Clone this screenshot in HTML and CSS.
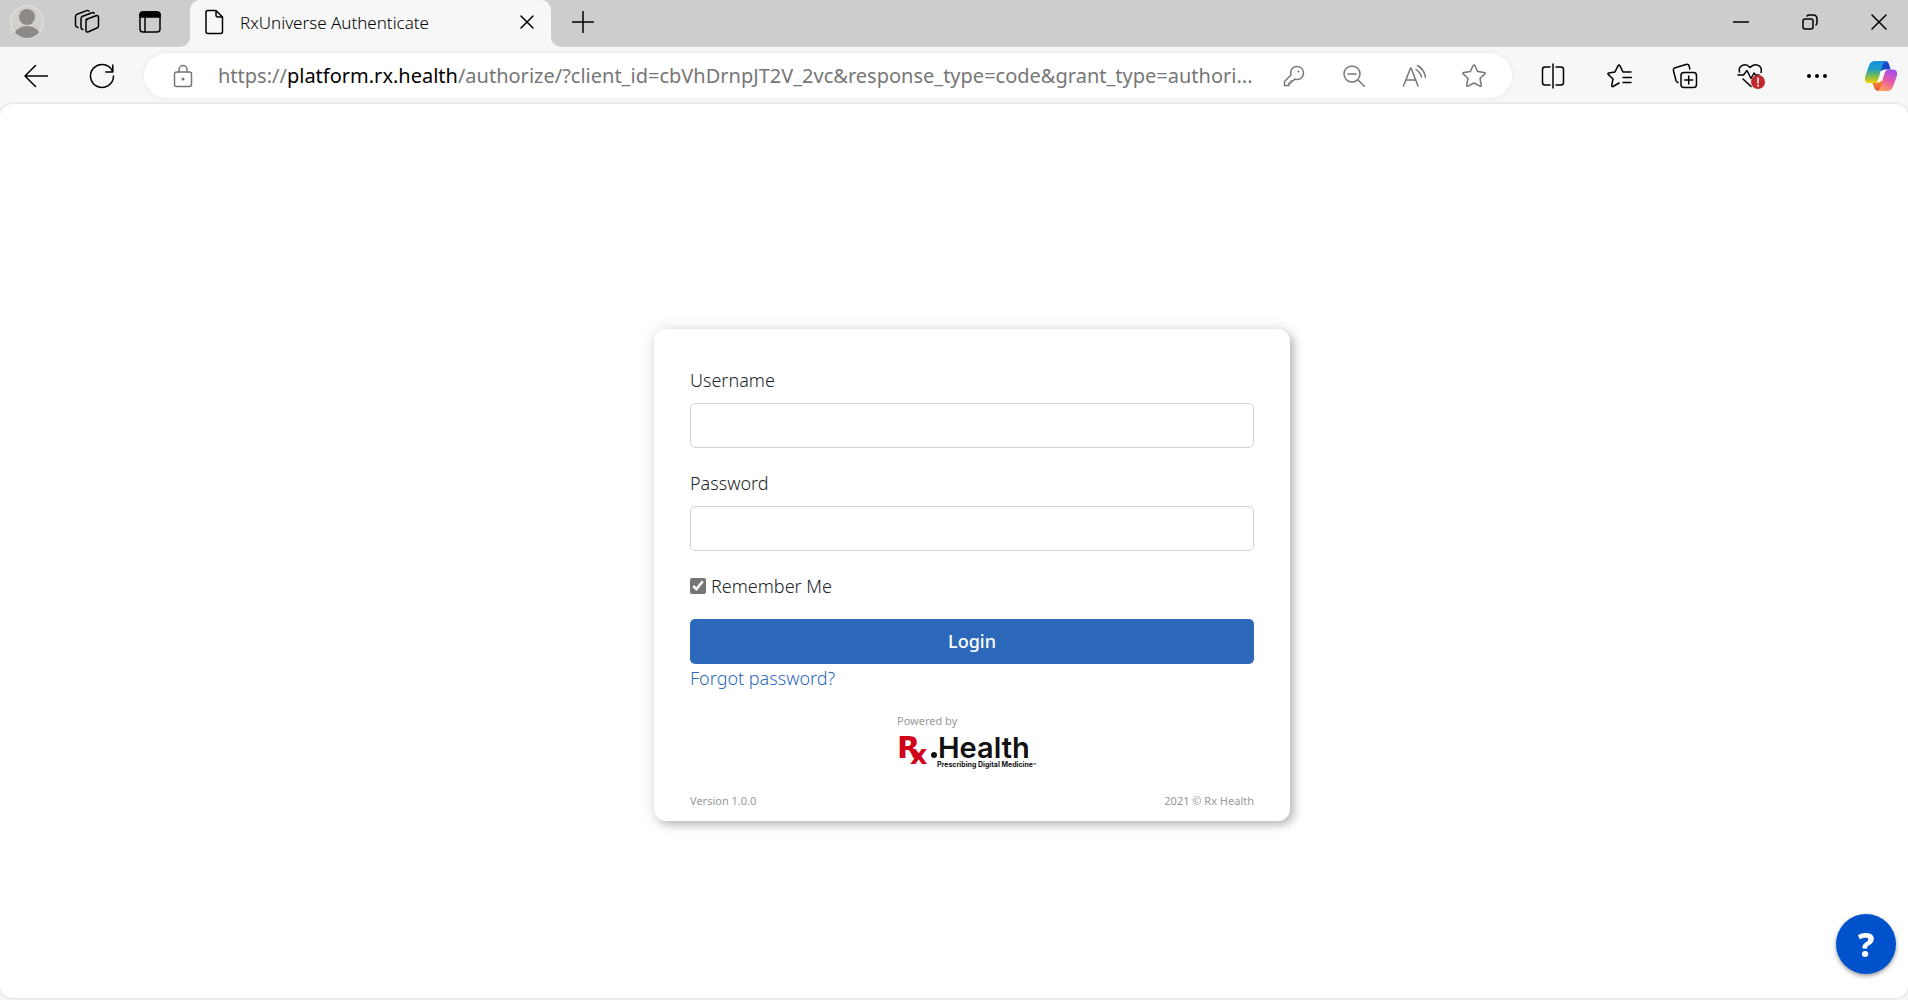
FILE: index.html
```html
<!DOCTYPE html>
<html lang="en">
<head>
    <meta charset="UTF-8">
    <meta name="viewport" content="width=device-width, initial-scale=1.0">
    <title>RxUniverse Authenticate</title>
    <link rel="stylesheet" href="styles.css">
</head>
<body>
    <header class="tab-strip">
        <div class="strip-left">
            <button class="avatar" aria-label="Profile">
                <svg width="34" height="34" viewBox="0 0 34 34">
                    <defs><clipPath id="face"><circle cx="17" cy="17" r="16"/></clipPath></defs>
                    <circle cx="17" cy="17" r="16" fill="#d2d0cc" stroke="#e0deda"/>
                    <g clip-path="url(#face)" fill="#8d8986" stroke="none">
                        <circle cx="17" cy="12" r="8"/>
                        <ellipse cx="17" cy="31" rx="13" ry="10"/>
                    </g>
                </svg>
            </button>
            <button class="workspaces" aria-label="Workspaces">
                <svg width="26" height="26" viewBox="0 0 26 26">
                    <path d="M12 10.500 22 6.700Q24.500 6 24.500 8.500V17q0 1.500-1.500 2l-8.500 3.800q-2.500 1-2.500-1.500V12.500q0-1.500 1.500-2.100"/>
                    <path d="M9 20.500q-2-.3-2-2.500V9.500q0-1.700 1.600-2.300L18 3.700q1.500-.5 2.200.6M4 18.500q-2.500-.5-2.500-2.500V7.500q0-1.700 1.600-2.300l9.400-3.600q1.800-.6 2.500.6"/>
                </svg>
            </button>
            <button class="tab-actions" aria-label="Tab actions">
                <svg width="24" height="24" viewBox="0 0 24 24">
                    <rect x="2" y="2" width="20" height="20" rx="3"/>
                    <path d="M2 7V5q0-3 3-3h14q3 0 3 3v2z" fill="#000"/>
                    <path d="M7 7v15"/>
                </svg>
            </button>
        </div>
        <div class="tab">
            <svg width="20" height="26" viewBox="0 0 20 26">
                <path d="M4 1.500h8l6.500 6.500v14.500q0 2-2 2H4q-2 0-2-2V3.500q0-2 2-2zM12 1.500V6q0 2 2 2h4.500"/>
            </svg>
            <span class="tab-title">RxUniverse Authenticate</span>
            <button class="tab-close" aria-label="Close tab">
                <svg width="14" height="14" viewBox="0 0 14 14"><path d="M1 1l12 12M13 1 1 13"/></svg>
            </button>
        </div>
        <div class="strip-right">
            <button class="new-tab" aria-label="New tab">
                <svg width="22" height="22" viewBox="0 0 22 22"><path d="M11 .5v21M.5 11h21"/></svg>
            </button>
            <div class="window-controls">
                <button aria-label="Minimize"><svg width="16" height="16" viewBox="0 0 16 16"><path d="M0 8h16"/></svg></button>
                <button aria-label="Restore">
                    <svg width="16" height="16" viewBox="0 0 16 16">
                        <rect x="1" y="5" width="10" height="10" rx="2"/>
                        <path d="M5 2q.7-1 2.500-1H11q4 0 4 4v3.500q0 1.500-1 2.300"/>
                    </svg>
                </button>
                <button aria-label="Close"><svg width="16" height="16" viewBox="0 0 16 16"><path d="M1 1l14 14M15 1 1 15"/></svg></button>
            </div>
        </div>
    </header>

    <nav class="toolbar">
        <button class="tool" aria-label="Back">
            <svg width="24" height="24" viewBox="0 0 24 24"><path d="M24 12H1M11.500 1.500 1 12l10.500 10.500"/></svg>
        </button>
        <button class="tool" aria-label="Refresh">
            <svg width="26" height="26" viewBox="0 0 26 26"><path d="M23.800 9A11.500 11.500 0 1 0 24.500 13M23.800 2v7h-7"/></svg>
        </button>
        <div class="address-bar">
            <button class="site-info" aria-label="View site information">
                <svg width="20" height="24" viewBox="0 0 20 24">
                    <rect x="1.500" y="8" width="17" height="14.500" rx="2"/>
                    <path d="M6 8V5.500a4 4 0 0 1 8 0V8"/>
                    <circle cx="10" cy="15" r="1.500" fill="#767676" stroke="none"/>
                </svg>
            </button>
            <div class="url" contenteditable="true" role="textbox" aria-label="Address" spellcheck="false">https://<span>platform.rx.health</span>/authorize/?client_id=cbVhDrnpJT2V_2vc&amp;response_type=code&amp;grant_type=authori...</div>
            <button class="page-action" aria-label="Saved passwords">
                <svg width="22" height="22" viewBox="0 0 22 22">
                    <path d="M13.500 1.500c4 0 7 2.500 7 6.500s-3 6.500-6.500 6.500c-1 0-1.500-.2-2.300-.4L10 16H8v2H6v2.500H1.500v-4L8 10C7 5 9.500 1.500 13.500 1.500z"/>
                    <circle cx="15.500" cy="6.500" r="1" fill="#767676" stroke="none"/>
                </svg>
            </button>
            <button class="page-action" aria-label="Zoom out">
                <svg width="22" height="22" viewBox="0 0 22 22"><circle cx="9" cy="9" r="8"/><path d="M5 9h8M14.800 14.800 21.500 21.500"/></svg>
            </button>
            <button class="page-action" aria-label="Read aloud">
                <svg width="24" height="24" viewBox="0 0 24 24"><path d="M1.500 22 8.500 4h.6L16 22M4 16h9.500M15.500 1.500q7 4 8 12M14 5.500q4.500 3 5.500 7.500"/></svg>
            </button>
            <button class="page-action" aria-label="Add to favorites">
                <svg width="26" height="26" viewBox="0 0 26 26">
                    <path d="M13 2q.6 0 1 .8l2.700 5.800 6.500.8q1.500.4.600 1.500L19 15.500l1.300 6.700q0 1.500-1.300 1L13 20l-6 3.200q-1.300.5-1.300-1L7 15.500 2.200 10.900q-.9-1.100.6-1.500l6.500-.8L12 2.800q.4-.8 1-.8z"/>
                </svg>
            </button>
        </div>
        <div class="tools-right">
            <button class="tool" aria-label="Split screen">
                <svg width="24" height="26" viewBox="0 0 24 26"><path d="M9 4H4Q1.500 4 1.500 6.500v13Q1.500 22 4 22h5M15 4h5q2.500 0 2.500 2.500v13q0 2.500-2.500 2.500h-5M12 1v24"/></svg>
            </button>
            <button class="tool" aria-label="Favorites">
                <svg width="26" height="26" viewBox="0 0 26 26">
                    <path d="M13 20l-6 3.500q-1.300.5-1.300-1L7 16 2.200 11.400q-.9-1.100.6-1.500l6-.8L12 2.800q1-1.600 2 0l3 6.200h8M17 14.500h8.500M17 19.500h8"/>
                </svg>
            </button>
            <button class="tool" aria-label="Collections">
                <svg width="26" height="26" viewBox="0 0 26 26">
                    <rect x="9" y="9.500" width="15.500" height="15" rx="3"/>
                    <path d="M16.700 13v8M12.700 17h8M6 19.500q-1.500-.5-2-2L1.500 8q-.6-2.500 1.700-3.200L14 1.500q2.500-.7 3.200 1.700l.6 2.800"/>
                </svg>
            </button>
            <button class="tool" aria-label="Browser essentials">
                <svg width="28" height="28" viewBox="0 0 28 28">
                    <path d="M2.500 10C1 4 8 0 13 5.500 18 0 26 3.500 24 10.500M1 13h5.500l3.500-4.500 4 8 3-5.500 1.500 2H22M6 17l8 7.500"/>
                    <circle cx="21" cy="20" r="7" fill="#c1272d" stroke="none"/>
                    <path d="M21 16v5" class="alert-mark"/>
                    <circle cx="21" cy="23.500" r="1" fill="#fff" stroke="none"/>
                </svg>
            </button>
            <button class="tool" aria-label="Settings and more">
                <svg width="22" height="6" viewBox="0 0 22 6"><g fill="#000" stroke="none"><circle cx="3" cy="3" r="2"/><circle cx="11" cy="3" r="2"/><circle cx="19" cy="3" r="2"/></g></svg>
            </button>
            <button class="copilot" aria-label="Copilot">
                <svg width="34" height="32" viewBox="0 0 34 32">
                    <defs>
                        <linearGradient id="cool" x1="0" y1="0" x2="0" y2="1"><stop offset="0" stop-color="#1490df"/><stop offset=".35" stop-color="#1b9fc9"/><stop offset=".65" stop-color="#6dba5b"/><stop offset="1" stop-color="#f5d000"/></linearGradient>
                        <linearGradient id="warm" x1=".7" y1="0" x2=".3" y2="1"><stop offset="0" stop-color="#a04ef0"/><stop offset=".5" stop-color="#e95aa6"/><stop offset="1" stop-color="#ffa257"/></linearGradient>
                        <linearGradient id="deep" x1="0" y1="0" x2="1" y2="1"><stop offset="0" stop-color="#1a58d8"/><stop offset="1" stop-color="#1736b8"/></linearGradient>
                        <linearGradient id="ember" x1="0" y1="0" x2="0" y2="1"><stop offset="0" stop-color="#f0b01e"/><stop offset="1" stop-color="#e94b3c"/></linearGradient>
                    </defs>
                    <g stroke="none">
                        <path d="M16 1h5q3 0 4 3l1.500 5.500H21q-3 0-4 3z" fill="url(#deep)"/>
                        <path d="M8 22h6l3-5 3 14h-5q-4 0-5-4z" fill="url(#ember)"/>
                        <path d="M11 1h11q-2.500.7-3.500 4l-4 14q-1 4-5 4H5q-5 0-4-6L5 5.500Q6.500 1 11 1z" fill="url(#cool)"/>
                        <path d="M23 31H13q2.500-.7 3.500-4l4-14q1-3.500 5-3.500H29q5 0 4 6l-4 11Q27.500 31 23 31z" fill="url(#warm)"/>
                        <path d="M18 10.500h4q-1.500 1-2 3l-2 6q-1 3-4.500 3H12q2-1 2.700-3.500l1.500-5.500q.5-2 1.800-3z" fill="#fff"/>
                    </g>
                </svg>
            </button>
        </div>
    </nav>

    <main class="page">
        <form class="card">
            <div class="form-group">
                <label for="username">Username</label>
                <input type="text" id="username">
            </div>
            <div class="form-group">
                <label for="password">Password</label>
                <input type="password" id="password">
            </div>
            <div class="remember">
                <input type="checkbox" id="remember" checked>
                <label for="remember">Remember Me</label>
            </div>
            <button type="submit" class="login">Login</button>
            <a href="#" class="forgot">Forgot password?</a>
            <div class="powered">
                <div>Powered by</div>
                <svg class="logo" width="150" height="38" viewBox="0 0 150 38">
                    <text class="logo-r" x="0" y="25">R</text>
                    <text class="logo-x" x="13" y="31">x</text>
                    <circle cx="37" cy="22" r="3"/>
                    <text class="logo-name" x="41" y="25">Health</text>
                    <text class="logo-tag" x="40" y="34">Prescribing Digital Medicine<tspan class="logo-tm">™</tspan></text>
                </svg>
            </div>
            <div class="card-footer">
                <span>Version 1.0.0</span>
                <span>2021 © Rx Health</span>
            </div>
        </form>
    </main>

    <button class="help" aria-label="Help">?</button>
</body>
</html>
```
FILE: styles.css
```css
* {
    box-sizing: border-box;
}
body {
    margin: 0;
    min-height: 100vh;
    display: flex;
    flex-direction: column;
    background: #f7f7f7;
    color: #212529;
    font-family: "Noto Sans", "Open Sans", sans-serif;
    font-size: 18px;
    font-weight: 300;
    line-height: 29px;
}
button {
    display: flex;
    align-items: center;
    justify-content: center;
    padding: 0;
    border: 0;
    background: none;
    font: inherit;
}
svg {
    flex: none;
    fill: none;
    stroke: #000;
    stroke-width: 2;
    stroke-linecap: round;
    stroke-linejoin: round;
}

/* tabs */
.tab-strip {
    display: flex;
    height: 47px;
    background: linear-gradient(#cdcdcd 50%, #f7f7f7 50%);
}
.strip-left,
.strip-right {
    display: flex;
    background: #cdcdcd;
}
.strip-left {
    width: 190px;
    padding-bottom: 4px;
    border-bottom-right-radius: 10px;
}
.strip-left svg,
.tab svg,
.strip-right svg {
    stroke-width: 1.5;
}
.avatar {
    width: 54px;
}
.workspaces {
    width: 66px;
}
.tab-actions {
    width: 60px;
}
.tab {
    display: flex;
    align-items: center;
    width: 361px;
    padding: 0 8px 3px 14px;
    border-radius: 10px 10px 0 0;
    background: #f7f7f7;
    color: #000;
    font-size: 17px;
}
.tab-title {
    flex: 1;
    margin-left: 16px;
}
.tab-close {
    width: 32px;
    height: 32px;
}
.strip-right {
    flex: 1;
    justify-content: space-between;
    padding-bottom: 4px;
    border-bottom-left-radius: 10px;
}
.new-tab {
    width: 64px;
}
.window-controls {
    display: flex;
    gap: 11px;
}
.window-controls button {
    width: 58px;
}

/* address row */
.toolbar {
    display: flex;
    align-items: center;
    height: 57px;
    padding-left: 3px;
}
.tool {
    width: 66px;
    height: 45px;
}
.tool svg {
    stroke-width: 1.5;
}
.address-bar {
    flex: 1;
    min-width: 0;
    display: flex;
    align-items: center;
    height: 45px;
    margin: 0 8px 0 9px;
    padding: 0 8px 0 4px;
    border-radius: 23px;
    background: #fff;
    box-shadow: 0 0 5px rgba(0,0,0,0.08);
}
.address-bar svg {
    stroke: #767676;
    stroke-width: 1.5;
}
.site-info {
    width: 70px;
}
.url {
    flex: 1;
    min-width: 0;
    overflow: hidden;
    white-space: nowrap;
    color: #767676;
    font-size: 20px;
    font-weight: 400;
    outline: none;
}
.url span {
    color: #000;
}
.page-action {
    width: 60px;
}
.tools-right {
    display: flex;
}
.tools-right .alert-mark {
    stroke: #fff;
}
.copilot {
    width: 58px;
    padding-left: 4px;
}

/* web page */
.page {
    flex: 1;
    display: flex;
    align-items: center;
    justify-content: center;
    margin-bottom: 2px;
    padding: 47px 0 0 36px;
    border-radius: 12px;
    background: #fff;
    box-shadow: 0 0 3px rgba(0,0,0,0.2);
}
.card {
    width: 636px;
    padding: 37px 36px 12px;
    border-radius: 12px;
    background: #fff;
    box-shadow: 4px 4px 8px rgba(0,0,0,0.22), 0 0 16px rgba(0,0,0,0.12);
}
.form-group {
    margin-bottom: 21px;
}
.form-group label {
    display: block;
    margin-bottom: 8px;
}
.form-group input {
    display: block;
    width: 100%;
    height: 45px;
    padding: 6px 14px;
    border: 1px solid #ced4da;
    border-radius: 5px;
    font: inherit;
}
.remember {
    display: flex;
    align-items: center;
    gap: 5px;
    margin-bottom: 18px;
}
.remember input {
    width: 16px;
    height: 16px;
    margin: 0;
    accent-color: #767676;
}
.login {
    width: 100%;
    height: 45px;
    border-radius: 5px;
    background: #2d69ba;
    color: #fff;
    font-weight: 500;
}
.forgot {
    color: #2d69ba;
    text-decoration: none;
}
.powered {
    width: 150px;
    margin: 20px auto 0;
}
.powered,
.card-footer {
    color: #999;
    font-size: 11px;
    font-weight: 400;
    line-height: 16px;
}
.logo {
    display: block;
    margin-top: 4px;
    fill: #111;
    stroke: none;
    font-family: Inter, sans-serif;
}
.logo-r,
.logo-x {
    fill: #d0021b;
    font-family: "DejaVu Sans", sans-serif;
    font-weight: 700;
}
.logo-r {
    font-size: 30px;
}
.logo-x {
    font-size: 27px;
}
.logo-name {
    font-size: 29px;
    font-weight: 600;
}
.logo-tag {
    font-size: 7px;
    font-weight: 700;
}
.logo-tm {
    font-size: 5px;
}
.card-footer {
    display: flex;
    justify-content: space-between;
    margin-top: 22px;
}
.help {
    position: fixed;
    right: 12px;
    bottom: 26px;
    width: 60px;
    height: 60px;
    border-radius: 50%;
    background: #0052cc;
    box-shadow: 0 2px 4px rgba(0,0,0,0.4);
    color: #fff;
    font-size: 34px;
    font-weight: 800;
}
```
